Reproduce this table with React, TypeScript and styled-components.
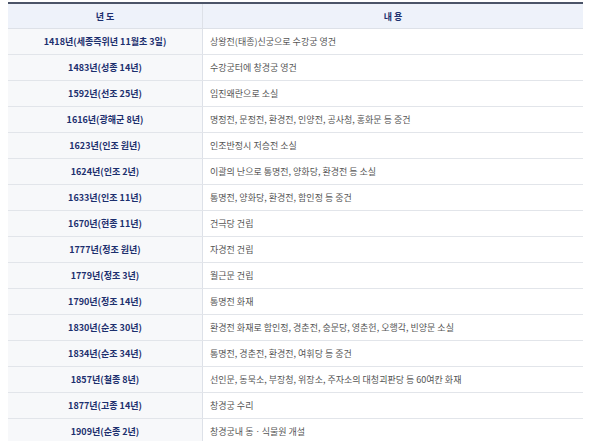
import React from "react";
import styled, { createGlobalStyle } from "styled-components";

const Global = createGlobalStyle`
  html, body { margin: 0; padding: 0; background: #fff; }
  body { font-family: "Noto Sans CJK KR", "Noto Sans", sans-serif; }
`;

const Wrap = styled.div`
  padding: 2px 17px 0 8px;
`;

const Table = styled.table`
  width: 100%;
  border-collapse: collapse;
  border-top: 2px solid #4b5468;
  table-layout: fixed;
`;

const Th = styled.th<{ $w?: number }>`
  height: 24px;
  padding: 0;
  background: #eef2fa;
  color: #1c2f6e;
  font-size: 9px;
  font-weight: 700;
  text-align: center;
  border-bottom: 1px solid #dde1e8;
  border-left: 1px solid #dde1e8;
  ${(p) => (p.$w ? `width: ${p.$w}px;` : "")}
  &:first-child { border-left: none; }
`;

const Year = styled.td`
  height: 25px;
  padding: 0;
  background: #f7f8fa;
  color: #1c2f6e;
  font-size: 9px;
  font-weight: 700;
  text-align: center;
  border-bottom: 1px solid #e2e5ea;
`;

const Desc = styled.td`
  height: 25px;
  padding: 0 0 0 7px;
  color: #555;
  font-size: 9px;
  text-align: left;
  border-bottom: 1px solid #e2e5ea;
  border-left: 1px solid #dde1e8;
`;

const rows: [string, string][] = [
  ["1418년(세종즉위년 11월초 3일)", "상왕전(태종)신궁으로 수강궁 영건"],
  ["1483년(성종 14년)", "수강궁터에 창경궁 영건"],
  ["1592년(선조 25년)", "임진왜란으로 소실"],
  ["1616년(광해군 8년)", "명정전, 문정전, 환경전, 인양전, 공사청, 홍화문 등 중건"],
  ["1623년(인조 원년)", "인조반정시 저승전 소실"],
  ["1624년(인조 2년)", "이괄의 난으로 통명전, 양화당, 환경전 등 소실"],
  ["1633년(인조 11년)", "통명전, 양화당, 환경전, 함인정 등 중건"],
  ["1670년(현종 11년)", "건극당 건립"],
  ["1777년(정조 원년)", "자경전 건립"],
  ["1779년(정조 3년)", "월근문 건립"],
  ["1790년(정조 14년)", "통명전 화재"],
  ["1830년(순조 30년)", "환경전 화재로 함인정, 경춘전, 숭문당, 영춘헌, 오행각, 빈양문 소실"],
  ["1834년(순조 34년)", "통명전, 경춘전, 환경전, 여휘당 등 중건"],
  ["1857년(철종 8년)", "선인문, 동묵소, 부장청, 위장소, 주자소의 대청괴판당 등 60여칸 화재"],
  ["1877년(고종 14년)", "창경궁 수리"],
  ["1909년(순종 2년)", "창경궁내 동ㆍ식물원 개설"],
];

export default function App() {
  return (
    <>
      <Global />
      <Wrap>
        <Table>
          <thead>
            <tr>
              <Th $w={194}>년 도</Th>
              <Th>내 용</Th>
            </tr>
          </thead>
          <tbody>
            {rows.map(([y, d]) => (
              <tr key={y}>
                <Year>{y}</Year>
                <Desc>{d}</Desc>
              </tr>
            ))}
          </tbody>
        </Table>
      </Wrap>
    </>
  );
}
